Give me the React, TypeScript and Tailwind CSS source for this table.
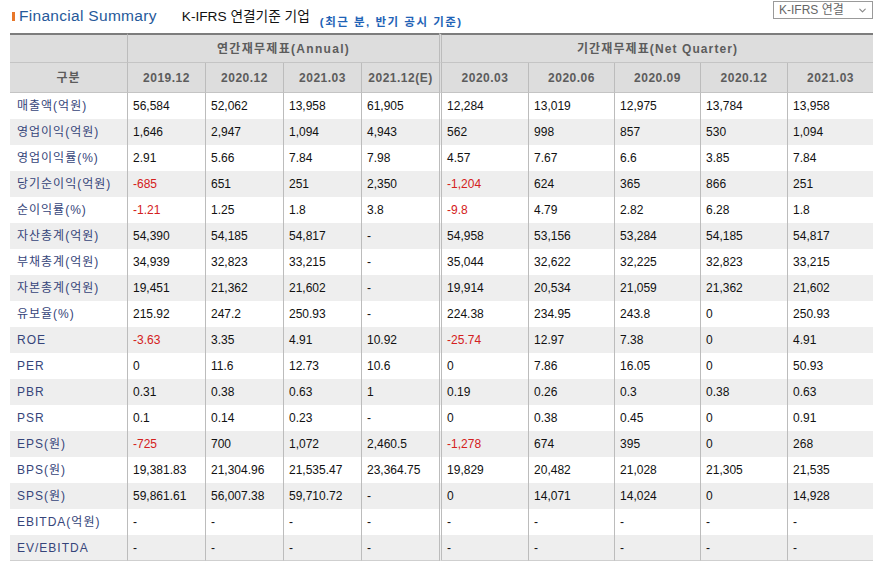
import React from 'react';
import { ChevronDown } from 'lucide-react';

type Row = { label: string; annual: string[]; quarter: string[] };

const annualCols = ['2019.12', '2020.12', '2021.03', '2021.12(E)'];
const quarterCols = ['2020.03', '2020.06', '2020.09', '2020.12', '2021.03'];

const dash4 = ['-', '-', '-', '-'];
const dash5 = ['-', '-', '-', '-', '-'];

const rows: Row[] = [
  { label: '매출액(억원)', annual: ['56,584', '52,062', '13,958', '61,905'], quarter: ['12,284', '13,019', '12,975', '13,784', '13,958'] },
  { label: '영업이익(억원)', annual: ['1,646', '2,947', '1,094', '4,943'], quarter: ['562', '998', '857', '530', '1,094'] },
  { label: '영업이익률(%)', annual: ['2.91', '5.66', '7.84', '7.98'], quarter: ['4.57', '7.67', '6.6', '3.85', '7.84'] },
  { label: '당기순이익(억원)', annual: ['-685', '651', '251', '2,350'], quarter: ['-1,204', '624', '365', '866', '251'] },
  { label: '순이익률(%)', annual: ['-1.21', '1.25', '1.8', '3.8'], quarter: ['-9.8', '4.79', '2.82', '6.28', '1.8'] },
  { label: '자산총계(억원)', annual: ['54,390', '54,185', '54,817', '-'], quarter: ['54,958', '53,156', '53,284', '54,185', '54,817'] },
  { label: '부채총계(억원)', annual: ['34,939', '32,823', '33,215', '-'], quarter: ['35,044', '32,622', '32,225', '32,823', '33,215'] },
  { label: '자본총계(억원)', annual: ['19,451', '21,362', '21,602', '-'], quarter: ['19,914', '20,534', '21,059', '21,362', '21,602'] },
  { label: '유보율(%)', annual: ['215.92', '247.2', '250.93', '-'], quarter: ['224.38', '234.95', '243.8', '0', '250.93'] },
  { label: 'ROE', annual: ['-3.63', '3.35', '4.91', '10.92'], quarter: ['-25.74', '12.97', '7.38', '0', '4.91'] },
  { label: 'PER', annual: ['0', '11.6', '12.73', '10.6'], quarter: ['0', '7.86', '16.05', '0', '50.93'] },
  { label: 'PBR', annual: ['0.31', '0.38', '0.63', '1'], quarter: ['0.19', '0.26', '0.3', '0.38', '0.63'] },
  { label: 'PSR', annual: ['0.1', '0.14', '0.23', '-'], quarter: ['0', '0.38', '0.45', '0', '0.91'] },
  { label: 'EPS(원)', annual: ['-725', '700', '1,072', '2,460.5'], quarter: ['-1,278', '674', '395', '0', '268'] },
  { label: 'BPS(원)', annual: ['19,381.83', '21,304.96', '21,535.47', '23,364.75'], quarter: ['19,829', '20,482', '21,028', '21,305', '21,535'] },
  { label: 'SPS(원)', annual: ['59,861.61', '56,007.38', '59,710.72', '-'], quarter: ['0', '14,071', '14,024', '0', '14,928'] },
  { label: 'EBITDA(억원)', annual: dash4, quarter: dash5 },
  { label: 'EV/EBITDA', annual: dash4, quarter: dash5 },
];

const isNeg = (v: string) => v.startsWith('-') && v.length > 1;

const Cell: React.FC<{ value: string; first?: boolean; last?: boolean }> = ({ value, first, last }) => (
  <td
    className={
      'h-[26px] pl-[5px] p-0 align-middle whitespace-nowrap ' +
      (first ? 'border-l-[3px] border-double border-[#bcbcbc] ' : 'border-l border-[#bcbcbc] ') +
      (last ? 'border-b border-b-[#cfcfcf] ' : '') +
      (isNeg(value) ? 'text-[#d42020]' : 'text-[#111]')
    }
  >
    {value}
  </td>
);

export default function App() {
  return (
    <div className="w-[874px] h-[571px] bg-white font-['Liberation_Sans','Noto_Sans_CJK_KR',sans-serif] text-[12px] leading-[14px]">
      <div className="flex h-[33px] items-start pl-[12px]">
        <div className="flex items-center mt-[8px]">
          <span className="w-[3px] h-[9px] bg-[#e8772a] mr-[4px]" />
          <span className="text-[15.5px] leading-[16px] text-[#26599a] tracking-[0.3px]">Financial Summary</span>
        </div>
        <span className="mt-[9px] ml-[25px] text-[13.7px] leading-[16px] text-[#111]">
          K-IFRS 연결기준 기업
        </span>
        <span className="mt-[15px] ml-[10px] text-[11.5px] leading-[14px] font-bold text-[#1f63b6] tracking-[1.5px]">
          (최근 분, 반기 공시 기준)
        </span>
        <div className="ml-auto mt-[1px] mr-[1px] flex h-[18px] w-[100px] items-center justify-between border border-[#9a9a9a] pl-[5px] pr-[4px] text-[12px] text-[#666]">
          <span>K-IFRS 연결</span>
          <ChevronDown className="h-[11px] w-[11px] text-[#888]" strokeWidth={2.5} />
        </div>
      </div>

      <table className="ml-[10px] w-[863px] table-fixed border-separate border-spacing-0">
        <colgroup>
          <col className="w-[117px]" />
          <col className="w-[78px]" />
          <col className="w-[78px]" />
          <col className="w-[78px]" />
          <col className="w-[78px]" />
          <col className="w-[89px]" />
          <col className="w-[86px]" />
          <col className="w-[86px]" />
          <col className="w-[87px]" />
          <col className="w-[86px]" />
        </colgroup>
        <thead>
          <tr className="bg-[#dddddd] text-[#5c5c5c] font-bold">
            <th className="h-[30px] border-t-2 border-t-[#7d7d7d] border-b border-b-[#c4c4c4]" />
            <th
              colSpan={4}
              className="h-[30px] border-t-2 border-t-[#7d7d7d] border-b border-b-[#c4c4c4] border-l border-l-[#bcbcbc] text-center tracking-[1.3px]"
            >
              연간재무제표(Annual)
            </th>
            <th
              colSpan={5}
              className="h-[30px] border-t-2 border-t-[#7d7d7d] border-b border-b-[#c4c4c4] border-l-[3px] border-double border-l-[#bcbcbc] text-center tracking-[1.1px]"
            >
              기간재무제표(Net Quarter)
            </th>
          </tr>
          <tr className="bg-[#dddddd] text-[#5c5c5c] font-bold">
            <th className="h-[30px] border-b border-b-[#c4c4c4] text-center tracking-[1px]">구분</th>
            {annualCols.map((c) => (
              <th key={c} className="h-[30px] border-b border-b-[#c4c4c4] border-l border-l-[#bcbcbc] text-center tracking-[0.5px]">
                {c}
              </th>
            ))}
            {quarterCols.map((c, i) => (
              <th
                key={c}
                className={
                  'h-[30px] border-b border-b-[#c4c4c4] text-center tracking-[0.5px] ' +
                  (i === 0 ? 'border-l-[3px] border-double border-l-[#bcbcbc]' : 'border-l border-l-[#bcbcbc]')
                }
              >
                {c}
              </th>
            ))}
          </tr>
        </thead>
        <tbody>
          {rows.map((r, idx) => {
            const last = idx === rows.length - 1;
            return (
              <tr key={r.label} className={idx % 2 === 1 ? 'bg-[#eeeeee]' : 'bg-white'}>
                <td className={'h-[26px] pl-[7px] p-0 text-[#36457a] whitespace-nowrap tracking-[1px] ' + (last ? 'border-b border-b-[#cfcfcf]' : '')}>
                  {r.label}
                </td>
                {r.annual.map((v, i) => (
                  <Cell key={'a' + i} value={v} last={last} />
                ))}
                {r.quarter.map((v, i) => (
                  <Cell key={'q' + i} value={v} first={i === 0} last={last} />
                ))}
              </tr>
            );
          })}
        </tbody>
      </table>
    </div>
  );
}
